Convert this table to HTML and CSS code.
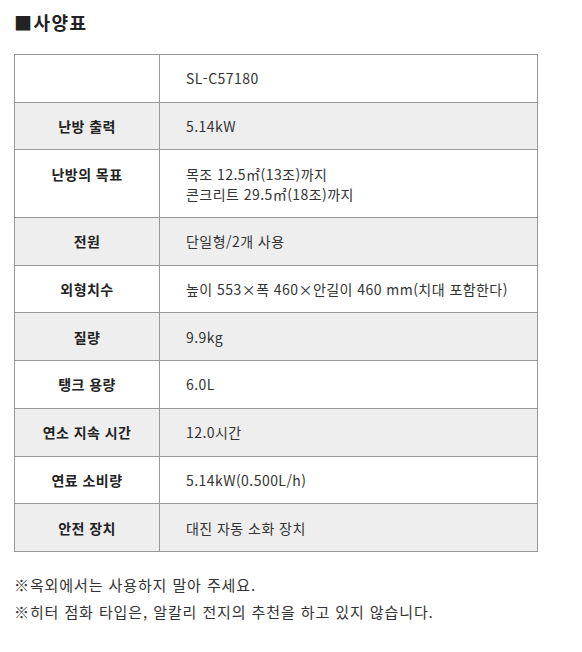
FILE: index.html
```html
<!DOCTYPE html>
<html lang="ko">
<head>
<meta charset="utf-8">
<title>사양표</title>
<link rel="stylesheet" href="styles.css">
</head>
<body>
<div class="spec">
  <h2 class="spec-title">■사양표</h2>
  <table class="spec-table">
    <colgroup><col class="col-head"><col class="col-val"></colgroup>
    <tbody>
      <tr><th></th><td>SL-C57180</td></tr>
      <tr><th>난방 출력</th><td>5.14kW</td></tr>
      <tr><th>난방의 목표</th><td>목조 12.5㎡(13조)까지<br>콘크리트 29.5㎡(18조)까지</td></tr>
      <tr><th>전원</th><td>단일형/2개 사용</td></tr>
      <tr><th>외형치수</th><td>높이 553×폭 460×안길이 460 mm(치대 포함한다)</td></tr>
      <tr><th>질량</th><td>9.9kg</td></tr>
      <tr><th>탱크 용량</th><td>6.0L</td></tr>
      <tr><th>연소 지속 시간</th><td>12.0시간</td></tr>
      <tr><th>연료 소비량</th><td>5.14kW(0.500L/h)</td></tr>
      <tr><th>안전 장치</th><td>대진 자동 소화 장치</td></tr>
    </tbody>
  </table>
  <ul class="notes">
    <li>※옥외에서는 사용하지 말아 주세요.</li>
    <li>※히터 점화 타입은, 알칼리 전지의 추천을 하고 있지 않습니다.</li>
  </ul>
</div>
</body>
</html>
```
FILE: styles.css
```css
body {
  margin: 0;
  background: #fff;
  font-family: "Noto Sans CJK KR", "Noto Sans", sans-serif;
  color: #333;
}
.spec {
  padding: 9px 14px 0;
}
.spec-title {
  margin: 0;
  font-size: 18px;
  line-height: 26px;
  font-weight: bold;
  letter-spacing: 1.5px;
  color: #222;
}
.spec-table {
  margin-top: 19px;
  width: 524px;
  border-collapse: collapse;
  font-size: 14px;
  line-height: 20px;
  letter-spacing: 0.45px;
}
.col-head { width: 145px; }
.spec-table th,
.spec-table td {
  border: 1px solid #999;
  padding: 13.35px 0 13.35px;
  vertical-align: top;
}
.spec-table th {
  text-align: center;
  font-weight: bold;
  color: #222;
}
.spec-table td {
  padding-left: 26px;
  text-align: left;
  color: #333;
}
.spec-table tr:nth-child(even) { background: #eee; }
.notes {
  list-style: none;
  margin: 19px 0 0;
  padding: 0;
  font-size: 15px;
  line-height: 27px;
  letter-spacing: 0.9px;
  color: #333;
}
```
